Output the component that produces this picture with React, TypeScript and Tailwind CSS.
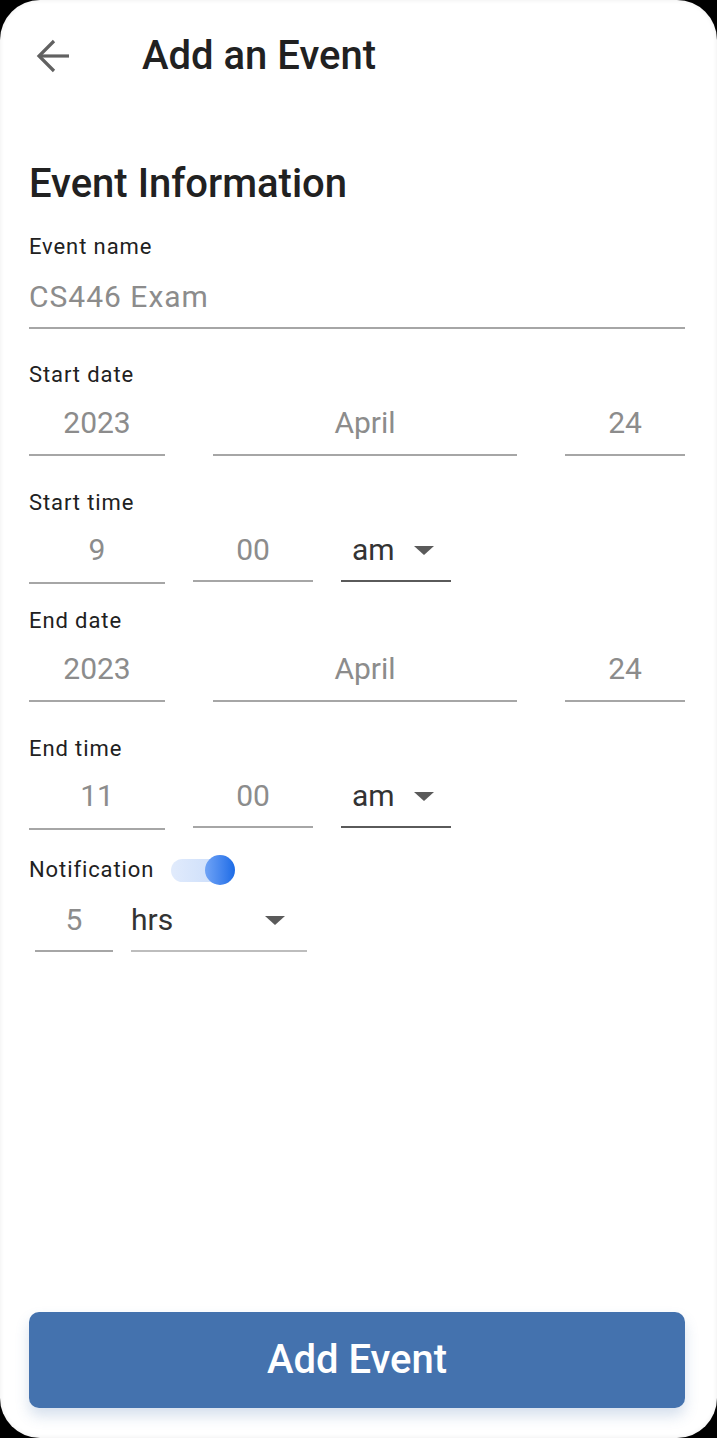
import { useState } from 'react'

const font = { fontFamily: 'Roboto, "Noto Sans", sans-serif' }

function BackArrow() {
  return (
    <svg width="34" height="34" viewBox="0 0 34 34" fill="none" className="text-[#616161]">
      <path d="M33 17H3" stroke="currentColor" strokeWidth="3.2" />
      <path d="M18 2L3 17L18 32" stroke="currentColor" strokeWidth="3.2" />
    </svg>
  )
}

function Caret({ className }: { className?: string }) {
  return (
    <svg width="20" height="9" viewBox="0 0 20 9" className={className}>
      <path d="M0 0H20L10 9Z" fill="#5a5a5a" />
    </svg>
  )
}

function Label({ text, className }: { text: string; className?: string }) {
  return (
    <div className={`text-[22px] leading-[24px] tracking-[0.9px] text-[#212121] ${className ?? ''}`}>
      {text}
    </div>
  )
}

function Field({ value, width, className }: { value: string; width: string; className?: string }) {
  return (
    <div className={`${width} border-b-2 border-[#a6a6a6] text-center text-[30px] leading-[40px] text-[#8c8c8c] ${className ?? ''}`}>
      {value}
    </div>
  )
}

function AmPm({ value }: { value: string }) {
  return (
    <div className="w-[110px] flex items-center border-b-2 border-[#5a5a5a] pl-[11px] pb-[10px] mb-[2px]">
      <span className="text-[30px] leading-[40px] text-[#333333]">{value}</span>
      <Caret className="ml-[19px]" />
    </div>
  )
}

function DateRow({ year, month, day }: { year: string; month: string; day: string }) {
  return (
    <div className="flex items-end gap-[48px]">
      <Field value={year} width="w-[136px]" className="pb-[11px]" />
      <Field value={month} width="w-[304px]" className="pb-[11px]" />
      <Field value={day} width="w-[120px]" className="pb-[11px]" />
    </div>
  )
}

function TimeRow({ hour, minute, ampm }: { hour: string; minute: string; ampm: string }) {
  return (
    <div className="flex items-end gap-[28px]">
      <Field value={hour} width="w-[136px]" className="pb-[12px]" />
      <Field value={minute} width="w-[120px]" className="pb-[10px] mb-[2px]" />
      <AmPm value={ampm} />
    </div>
  )
}

export default function App() {
  const [notify, setNotify] = useState(true)

  return (
    <div className="bg-black min-h-screen" style={font}>
      <div className="h-[1438px] w-full bg-white rounded-[40px] shadow-[inset_0_0_5px_rgba(0,0,0,0.08)] flex flex-col">
        <div className="flex items-center pt-[36px] h-[76px]">
          <button className="ml-[36px]">
            <BackArrow />
          </button>
          <h1 className="ml-[72px] text-[40px] leading-[40px] font-medium text-[#212121]">Add an Event</h1>
        </div>

        <div className="pl-[29px] pr-[32px]">
          <h2 className="mt-[86px] text-[40px] leading-[44px] font-medium text-[#212121]">Event Information</h2>

          <Label text="Event name" className="mt-[29px]" />
          <div className="mt-[18px] border-b-2 border-[#a6a6a6] pb-[10px] text-[30px] leading-[40px] tracking-[1px] text-[#8c8c8c]">
            CS446 Exam
          </div>

          <Label text="Start date" className="mt-[34px]" />
          <div className="mt-[16px]">
            <DateRow year="2023" month="April" day="24" />
          </div>

          <Label text="Start time" className="mt-[35px]" />
          <div className="mt-[15px]">
            <TimeRow hour="9" minute="00" ampm="am" />
          </div>

          <Label text="End date" className="mt-[25px]" />
          <div className="mt-[16px]">
            <DateRow year="2023" month="April" day="24" />
          </div>

          <Label text="End time" className="mt-[35px]" />
          <div className="mt-[15px]">
            <TimeRow hour="11" minute="00" ampm="am" />
          </div>

          <div className="mt-[25px] flex items-center">
            <Label text="Notification" className="w-[142px]" />
            <button
              onClick={() => setNotify(!notify)}
              className="relative w-[64px] h-[30px] flex items-center"
            >
              <span className="block w-[58px] h-[23px] rounded-full bg-gradient-to-r from-[#e1ebfc] to-[#c7dbfa]" />
              <span className="absolute right-0 top-0 w-[30px] h-[30px] rounded-full bg-gradient-to-r from-[#6fa3f6] to-[#1a6be6]" />
            </button>
          </div>

          <div className="mt-[15px] flex items-end gap-[18px] pl-[6px]">
            <Field value="5" width="w-[78px]" className="pb-[10px]" />
            <div className="w-[176px] flex items-center border-b-2 border-[#bdbdbd] pb-[10px]">
              <span className="text-[30px] leading-[40px] text-[#333333]">hrs</span>
              <Caret className="ml-auto mr-[22px]" />
            </div>
          </div>
        </div>

        <div className="flex-1" />

        <div className="pl-[29px] pr-[32px] pb-[30px]">
          <button className="w-full h-[96px] rounded-[10px] bg-[#4472ae] text-white text-[40px] font-medium shadow-[0_8px_14px_rgba(68,114,174,0.22)]">
            Add Event
          </button>
        </div>
      </div>
    </div>
  )
}
